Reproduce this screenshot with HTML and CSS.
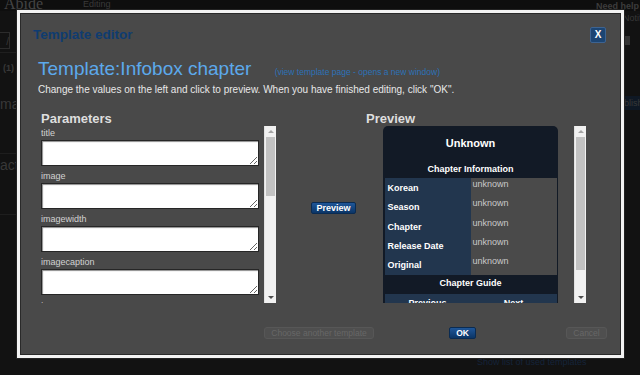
FILE: index.html
```html
<!DOCTYPE html>
<html lang="en">
<head>
    <meta charset="UTF-8">
    <title>Template editor</title>
    <link rel="stylesheet" href="styles.css">
</head>
<body>
    <!-- PAGE BEHIND THE DIALOG -->
    <div class="page">
        <header class="topbar">
            <span class="site-name">Abide</span>
            <span class="crumb">Editing</span>
            <span class="help">Need help editing?</span>
        </header>
        <div class="page-main">
            <aside class="rail-left">
                <div class="rail-box">/</div>
                <div class="rail-count">(1)</div>
                <div class="rail-word">mar</div>
                <div class="rail-word">acte</div>
            </aside>
            <div class="page-center"></div>
            <aside class="rail-right">
                <div class="notif">Notif</div>
                <div class="rail-sq"></div>
                <div class="publish">blish</div>
            </aside>
        </div>
        <div class="page-foot"><a href="#">Show list of used templates</a></div>
    </div>

    <!-- DIALOG -->
    <div class="modal">
        <div class="modal-head">
            <h1 class="modal-title">Template editor</h1>
            <button class="close-btn">X</button>
        </div>
        <div class="modal-body">
            <h2 class="tpl-name">Template:Infobox chapter <a class="tpl-link" href="#">(view template page - opens a new window)</a></h2>
            <p class="intro">Change the values on the left and click to preview. When you have finished editing, click "OK".</p>

            <div class="editor-cols">
                <section class="params">
                    <h3 class="col-title">Parameters</h3>
                    <div class="pane">
                        <div class="param-list">
                            <label class="field"><span>title</span><textarea></textarea></label>
                            <label class="field"><span>image</span><textarea></textarea></label>
                            <label class="field"><span>imagewidth</span><textarea></textarea></label>
                            <label class="field"><span>imagecaption</span><textarea></textarea></label>
                            <label class="field"><span>type</span><textarea></textarea></label>
                        </div>
                        <div class="scrollbar">
                            <span class="arr up"></span>
                            <div class="track"><div class="thumb thumb-short"></div></div>
                            <span class="arr down"></span>
                        </div>
                    </div>
                </section>

                <div class="preview-action">
                    <button class="btn-blue">Preview</button>
                </div>

                <section class="preview">
                    <h3 class="col-title">Preview</h3>
                    <div class="pane">
                        <div class="preview-body">
                            <div class="infobox">
                                <div class="ib-title">Unknown</div>
                                <div class="ib-section">Chapter Information</div>
                                <div class="ib-row"><div class="ib-label">Korean</div><div class="ib-value">unknown</div></div>
                                <div class="ib-row"><div class="ib-label">Season</div><div class="ib-value">unknown</div></div>
                                <div class="ib-row"><div class="ib-label">Chapter</div><div class="ib-value">unknown</div></div>
                                <div class="ib-row"><div class="ib-label">Release Date</div><div class="ib-value">unknown</div></div>
                                <div class="ib-row"><div class="ib-label">Original</div><div class="ib-value">unknown</div></div>
                                <div class="ib-section">Chapter Guide</div>
                                <div class="ib-nav"><div>Previous</div><div>Next</div></div>
                            </div>
                        </div>
                        <div class="scrollbar">
                            <span class="arr up"></span>
                            <div class="track"><div class="thumb thumb-long"></div></div>
                            <span class="arr down"></span>
                        </div>
                    </div>
                </section>
            </div>

            <div class="modal-foot">
                <button class="btn-grey choose">Choose another template</button>
                <button class="btn-blue ok">OK</button>
                <button class="btn-grey cancel">Cancel</button>
            </div>
        </div>
    </div>
</body>
</html>
```

FILE: styles.css
```css
/* GENERAL */
body {
    margin: 0;
    width: 640px;
    height: 375px;
    overflow: hidden;
    position: relative;
    background-color: #121212;
    font-family: "Liberation Sans", Arial, sans-serif;
    color: #e4e4e4;
}

button {
    font-family: inherit;
    cursor: pointer;
}

/* PAGE BEHIND */
.topbar {
    display: grid;
    grid-template-columns: 83px 513px 1fr;
    height: 11px;
    overflow: hidden;
    background-color: #0e0e0e;
    white-space: nowrap;
}

.site-name {
    padding-left: 4px;
    font-family: "Liberation Serif", serif;
    font-size: 16px;
    line-height: 7px;
    color: #444;
}

.crumb {
    font-size: 9px;
    line-height: 8px;
    color: #3a3a3a;
}

.help {
    font-size: 9px;
    font-weight: bold;
    line-height: 13px;
    color: #3c3c3c;
    overflow: hidden;
}

.page-main {
    display: flex;
    height: 347px;
}

.rail-left {
    width: 17px;
    overflow: hidden;
    padding-top: 21px;
    color: #383838;
}

.rail-box {
    width: 10px;
    height: 17px;
    border: 1px solid #2c2c2c;
    border-left: none;
    font-size: 10px;
    line-height: 17px;
    text-align: right;
    margin-bottom: 3px;
    box-sizing: border-box;
}

.rail-count {
    border-top: 1px solid #1f1f1f;
    padding: 10px 0 0 3px;
    font-size: 9px;
    font-weight: bold;
    height: 30px;
}

.rail-word {
    font-size: 14px;
    height: 60px;
    line-height: 22px;
    border-bottom: 1px solid #1e1e1e;
}

.page-center {
    flex: 1;
}

.rail-right {
    width: 16px;
    overflow: hidden;
    white-space: nowrap;
    color: #383838;
}

.notif {
    font-size: 9px;
    line-height: 14px;
    margin-left: -1px;
}

.rail-sq {
    width: 5px;
    height: 9px;
    margin: 11px 0 0 1px;
    background-color: #333;
}

.publish {
    margin-top: 51px;
    padding: 2px 0;
    font-size: 9px;
    background-color: #0f1824;
}

.page-foot {
    padding-left: 477px;
    font-size: 9px;
    line-height: 9px;
}

.page-foot a {
    color: #15243a;
    text-decoration: none;
}

/* DIALOG */
.modal {
    position: absolute;
    left: 17px;
    top: 10px;
    width: 607px;
    height: 348px;
    box-sizing: border-box;
    border: 3px solid #f3f3f3;
    background-color: #494949;
    box-shadow: inset 0 0 0 1px #2a2a2a, 0 0 0 1px #222;
}

.modal-head {
    display: flex;
    align-items: center;
    justify-content: space-between;
    height: 43px;
    padding: 0 15px 0 13px;
}

.modal-title {
    margin: 0;
    font-size: 13.5px;
    font-weight: bold;
    color: #0f3c70;
}

.close-btn {
    width: 16px;
    height: 16px;
    padding: 0;
    border: 1px solid #3d6391;
    border-radius: 2px;
    background-color: #1c4573;
    color: #fff;
    font-size: 10px;
    font-weight: bold;
    line-height: 14px;
}

.modal-body {
    padding-left: 18px;
}

.tpl-name {
    margin: 0;
    height: 27px;
    font-size: 19px;
    font-weight: normal;
    line-height: 25px;
    color: #5ca9ec;
}

.tpl-link {
    margin-left: 18px;
    font-size: 8.5px;
    line-height: 1;
    color: #2c72b8;
    text-decoration: none;
}

.intro {
    margin: 0;
    font-size: 10px;
    line-height: 14px;
    color: #e8e8e8;
}

/* COLUMNS */
.editor-cols {
    display: flex;
    margin: 14px 0 0 3px;
}

.col-title {
    margin: 0;
    font-size: 13px;
    line-height: 15px;
    color: #dedede;
}

.pane {
    display: flex;
    height: 177px;
    overflow: hidden;
}

.params .pane {
    width: 235px;
}

.param-list {
    flex: 1;
    overflow: hidden;
}

.field {
    display: block;
}

.field span {
    display: block;
    font-size: 9px;
    line-height: 14px;
    color: #d2d2d2;
}

.field textarea {
    display: block;
    width: 218px;
    height: 26px;
    margin: 0 0 3px;
    box-sizing: border-box;
    border: 1px solid #262626;
    background-color: #fff;
    box-shadow: inset 1px 1px 1px rgba(0, 0, 0, 0.45);
}

/* FAKE SCROLLBARS */
.scrollbar {
    display: flex;
    flex-direction: column;
    width: 12px;
    background-color: #f1f1f1;
    border-left: 1px solid #e2e2e2;
    box-sizing: border-box;
}

.arr {
    display: flex;
    justify-content: center;
    align-items: center;
    height: 11px;
}

.arr::after {
    content: "";
    border-left: 3px solid transparent;
    border-right: 3px solid transparent;
}

.arr.up::after {
    border-bottom: 3px solid #a3a3a3;
}

.arr.down::after {
    border-top: 3px solid #4c4c4c;
}

.track {
    flex: 1;
}

.thumb {
    width: 9px;
    margin: 0 auto;
    background-color: #c2c2c2;
}

.thumb-short {
    height: 59px;
}

.thumb-long {
    height: 133px;
}

.preview-action {
    width: 90px;
    padding: 86px 0 0 35px;
    box-sizing: border-box;
}

.btn-blue {
    height: 12px;
    padding: 0 4px;
    border: 1px solid #0a2b52;
    border-radius: 2px;
    background: linear-gradient(#1f5698, #0b3566);
    color: #fff;
    font-size: 9px;
    font-weight: bold;
    line-height: 10px;
}

.preview-action .btn-blue {
    width: 45px;
}

/* PREVIEW */
.preview .pane {
    width: 220px;
}

.preview-body {
    flex: 1;
    overflow: hidden;
}

.infobox {
    width: 175px;
    margin: 0 auto;
    padding: 0 1px 0 2px;
    box-sizing: border-box;
    border-radius: 5px 5px 0 0;
    background-color: #121a26;
    color: #fff;
    font-weight: bold;
}

.ib-title {
    height: 34px;
    font-size: 11px;
    line-height: 34px;
    text-align: center;
}

.ib-section {
    height: 18px;
    font-size: 9px;
    line-height: 18px;
    text-align: center;
}

.ib-section + .ib-nav {
    margin-top: 1px;
}

.ib-row {
    display: grid;
    grid-template-columns: 86px 86px;
    height: 19.3px;
}

.ib-row + .ib-section {
    height: 19px;
    line-height: 19px;
}

.ib-label {
    padding-left: 3px;
    background-color: #22364e;
    font-size: 9px;
    line-height: 20px;
}

.ib-value {
    padding: 1px 2px;
    background-color: #4a4a4a;
    color: #c9c9c9;
    font-size: 9px;
    font-weight: normal;
    line-height: 11px;
}

.ib-nav {
    display: grid;
    grid-template-columns: 86px 86px;
    height: 19px;
    background-color: #22364e;
    font-size: 9px;
    line-height: 19px;
    text-align: center;
}

/* BOTTOM BUTTONS */
.modal-foot {
    display: flex;
    align-items: center;
    margin-top: 24px;
}

.btn-grey {
    height: 12px;
    padding: 0;
    border: 1px solid #575757;
    border-radius: 3px;
    background-color: #4f4f4f;
    color: #676767;
    font-size: 8.5px;
    line-height: 10px;
}

.choose {
    width: 110px;
    margin-left: 226px;
}

.ok {
    width: 27px;
    margin-left: 75px;
    font-size: 8.5px;
}

.cancel {
    width: 41px;
    margin-left: 90px;
}
```
